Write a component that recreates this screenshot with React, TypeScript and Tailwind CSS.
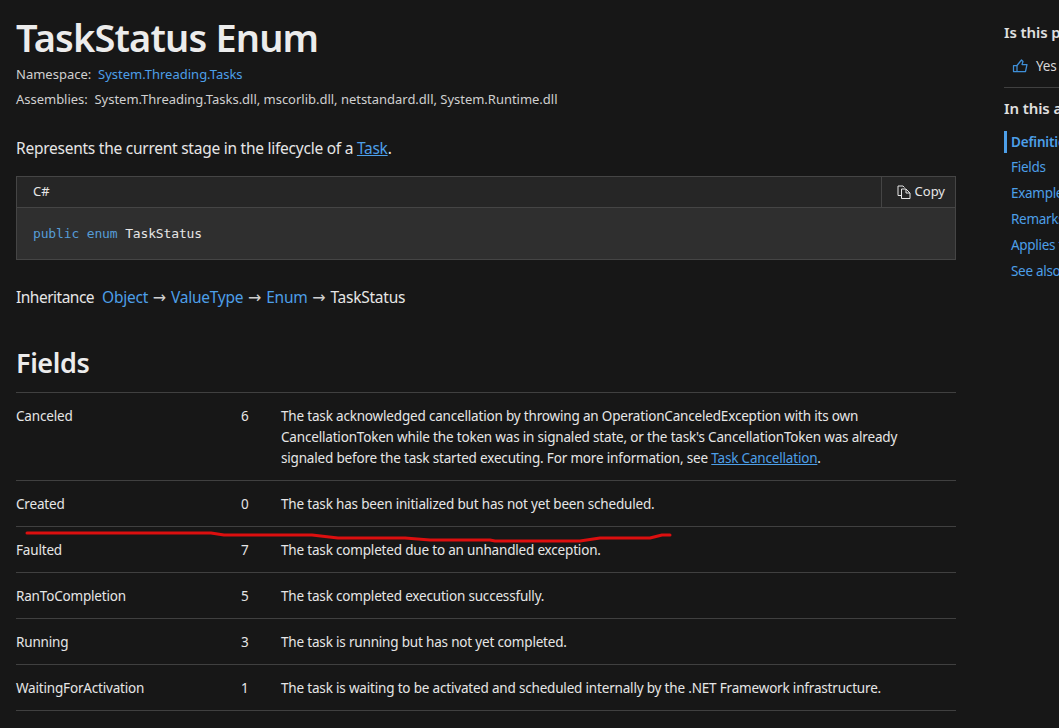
import React from "react";

const rows = [
  { name: "Created", value: "0", text: "The task has been initialized but has not yet been scheduled." },
  { name: "Faulted", value: "7", text: "The task completed due to an unhandled exception." },
  { name: "RanToCompletion", value: "5", text: "The task completed execution successfully." },
  { name: "Running", value: "3", text: "The task is running but has not yet completed." },
  { name: "WaitingForActivation", value: "1", text: "The task is waiting to be activated and scheduled internally by the .NET Framework infrastructure." },
];

const toc = ["Fields", "Examples", "Remarks", "Applies to", "See also"];

function Row({ name, value, children }: { name: string; value: string; children: React.ReactNode }) {
  return (
    <div className="flex border-b border-[#404040] pt-[13px] pb-[11px] text-[13.5px] leading-[21px] tracking-[-0.18px] text-[#e6e6e6]">
      <div className="w-[225px] shrink-0">{name}</div>
      <div className="w-[40px] shrink-0">{value}</div>
      <div className="flex-1 pr-[40px]">{children}</div>
    </div>
  );
}

function Arrow() {
  return <span className="mx-[1px] font-['DejaVu_Sans',sans-serif] text-[16px] tracking-normal text-[#cfcfcf]">→</span>;
}

export default function App() {
  return (
    <div className="relative flex h-[728px] w-[1059px] overflow-hidden bg-[#171717] pl-4 font-['Noto_Sans','Open_Sans',sans-serif] text-[#e6e6e6]">
      <main className="w-[940px] shrink-0">
        <h1 className="mt-[13px] text-[38px] font-semibold leading-[48px] tracking-[-0.85px] text-[#ececec]">TaskStatus Enum</h1>
        <div className="mt-[3px] text-[13px] leading-[20px] text-[#d0d0d0]">
          Namespace:&nbsp; <a className="text-[#4d9fe8]">System.Threading.Tasks</a>
        </div>
        <div className="mt-[5px] text-[13px] leading-[20px] tracking-[-0.02px] text-[#d0d0d0]">
          Assemblies:&nbsp; System.Threading.Tasks.dll, mscorlib.dll, netstandard.dll, System.Runtime.dll
        </div>
        <p className="mt-[27px] text-[15.5px] leading-[24px] tracking-[-0.25px] text-[#e6e6e6]">
          Represents the current stage in the lifecycle of a <a className="text-[#4d9fe8] underline">Task</a>.
        </p>
        <div className="mt-[16px] border border-[#454545] bg-[#2f2f2f]">
          <div className="flex h-[31px] items-center justify-between border-b border-[#454545] bg-[#262626] text-[13px]">
            <span className="pl-4 text-[#e6e6e6]">C#</span>
            <button className="flex h-full w-[74px] items-center justify-end gap-[4px] border-l border-[#454545] pr-[10px] text-[#e6e6e6]">
              <svg width="14" height="14" viewBox="0 0 14 14" fill="none" stroke="currentColor" strokeWidth="1">
                <path d="M4.5 10.5H1V1H6L7.5 2.5" />
                <path d="M4.5 4H9L13 8V13.5H4.5Z" />
                <path d="M9 4V8H13" />
              </svg>
              Copy
            </button>
          </div>
          <div className="flex h-[51px] items-center pl-4 font-['DejaVu_Sans_Mono',monospace] text-[13px] tracking-[-0.15px]">
            <span className="text-[#569cd6]">public enum</span>&nbsp;<span className="text-[#e6e6e6]">TaskStatus</span>
          </div>
        </div>
        <div className="mt-[25px] h-[24px] text-[15.5px] leading-[24px] tracking-[-0.25px]">
          <span className="mr-[8px] tracking-[-0.5px]">Inheritance</span><a className="text-[#4d9fe8]">Object</a> <Arrow /> <a className="text-[#4d9fe8]">ValueType</a> <Arrow /> <a className="text-[#4d9fe8]">Enum</a> <Arrow /> TaskStatus
        </div>
        <h2 className="mt-[35px] border-b border-[#404040] pb-[11px] text-[27px] font-semibold leading-[37px] tracking-[-0.4px] text-[#ececec]">Fields</h2>
        <Row name="Canceled" value="6">
          The task acknowledged cancellation by throwing an OperationCanceledException with its own CancellationToken while the token was in signaled state, or the task's CancellationToken was already signaled before the task started executing. For more information, see <a className="text-[#4d9fe8] underline">Task Cancellation</a>.
        </Row>
        {rows.map((r) => (
          <Row key={r.name} name={r.name} value={r.value}>{r.text}</Row>
        ))}
      </main>
      <aside className="ml-[48px] w-[200px] shrink-0 pt-[22px] text-[13.5px] leading-[20px] tracking-[-0.18px]">
        <div className="text-[15px] font-semibold tracking-[-0.1px] text-[#e0e0e0]">Is this page helpful?</div>
        <div className="mt-[14px] flex h-[20px] items-center gap-[8px] pl-[8px] text-[#d8d8d8]">
          <svg width="16" height="14" viewBox="0 0 16 14" fill="none" stroke="#3f8fd8" strokeWidth="1.25" strokeLinejoin="round">
            <path d="M1.5 6.5H5L9.5 1L11 2.5L10 5.5H15L13.5 12.5H1.5Z" />
            <path d="M5 6.5V12.5" />
          </svg>
          Yes
        </div>
        <div className="mt-[11px] border-t border-[#404040]" />
        <div className="mt-[10px] text-[15px] font-semibold tracking-[-0.1px] text-[#e0e0e0]">In this article</div>
        <div className="mt-[13px] border-l-[3px] border-[#4d9fe8] pl-1 font-semibold leading-[22px] text-[#4d9fe8]">Definition</div>
        <div className="mt-[4px] flex flex-col gap-[6px] pl-[7px] tracking-[-0.3px] text-[#4d9fe8]">
          {toc.map((t) => <div key={t}>{t}</div>)}
        </div>
      </aside>
      <svg className="absolute left-0 top-0" width="1059" height="728" fill="none">
        <path d="M27 533L211 533L224 535L312 535L338 538L405 538L430 540L490 540L495 541L580 541L600 538L650 538L662 535L670 535" stroke="#dc0f0f" strokeWidth="3" strokeLinejoin="round" strokeLinecap="round" />
      </svg>
    </div>
  );
}
